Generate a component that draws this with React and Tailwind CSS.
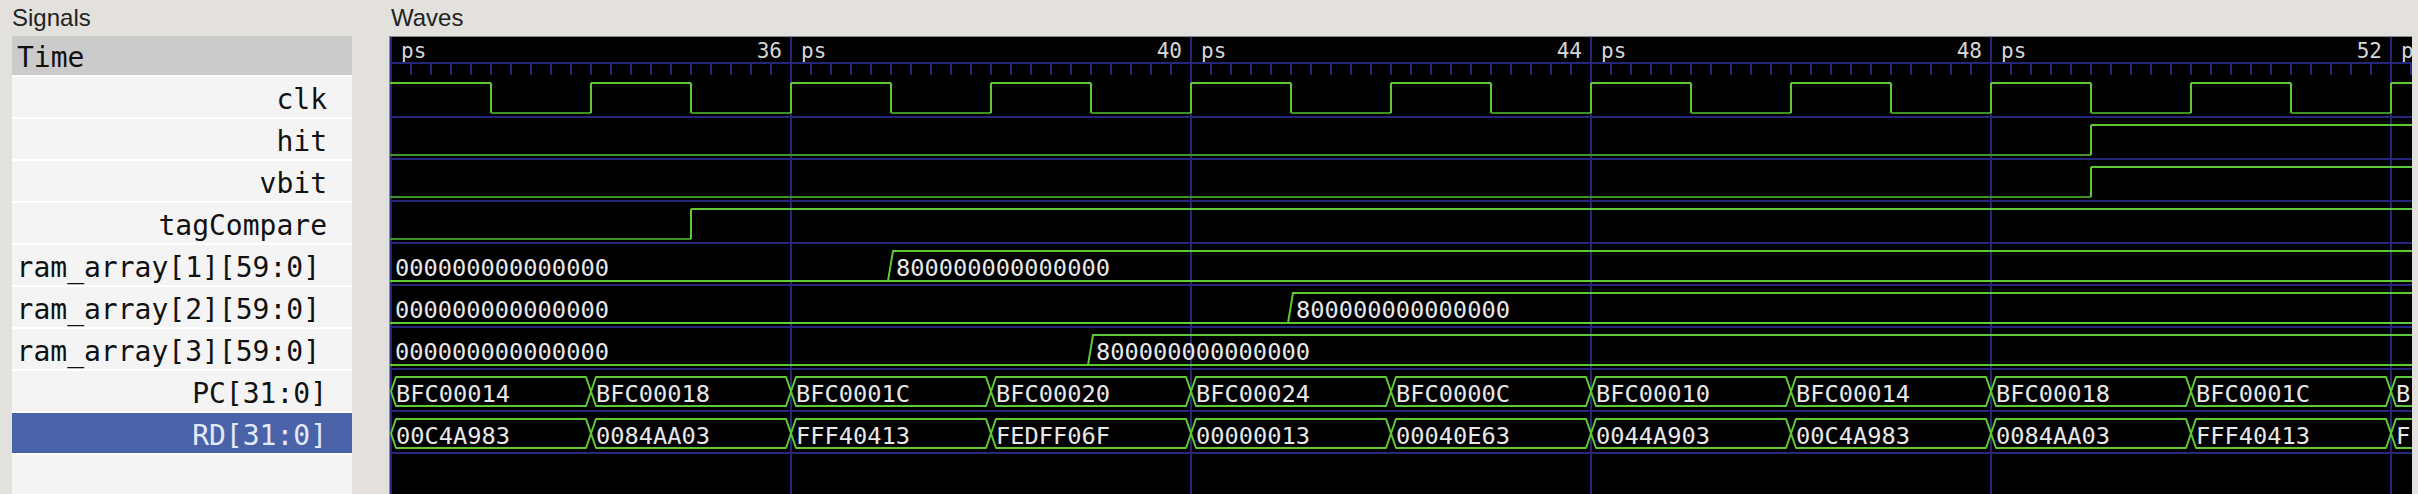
import React from "react";

const W = 2022;
const H = 457;
const GRID = "#26267c";
const HI = "#5cc935";
const LO = "#3f922a";
const BUS = "#5cc935";
const MONO = "DejaVu Sans Mono, Liberation Mono, monospace";

const names = [
  "clk",
  "hit",
  "vbit",
  "tagCompare",
  "ram_array[1][59:0]",
  "ram_array[2][59:0]",
  "ram_array[3][59:0]",
  "PC[31:0]",
  "RD[31:0]",
];

const PC = ["BFC00014", "BFC00018", "BFC0001C", "BFC00020", "BFC00024", "BFC0000C", "BFC00010", "BFC00014", "BFC00018", "BFC0001C", "BFC00020"];
const RD = ["00C4A983", "0084AA03", "FFF40413", "FEDFF06F", "00000013", "00040E63", "0044A903", "00C4A983", "0084AA03", "FFF40413", "FEDFF06F"];

const rowTop = (k) => 38 + 42 * k;

function BitTrace({ k, initial, edges }) {
  const top = rowTop(k);
  const hi = top + 8;
  const lo = top + 38;
  const els = [];
  let level = initial;
  let x = 0;
  const pts = [...edges, W];
  pts.forEach((e, i) => {
    const y = level ? hi : lo;
    els.push(<line key={"h" + i} x1={x} y1={y} x2={e} y2={y} stroke={level ? HI : LO} strokeWidth="2" />);
    if (e < W) {
      els.push(<line key={"v" + i} x1={e} y1={hi} x2={e} y2={lo} stroke={HI} strokeWidth="2" />);
      level = !level;
    }
    x = e;
  });
  return <g>{els}</g>;
}

function RamTrace({ k, t }) {
  const top = rowTop(k);
  const a = top + 8;
  const b = top + 38;
  return (
    <g>
      <path d={`M0 ${b} L${t - 3} ${b} L${t + 2} ${a} L${W} ${a}`} fill="none" stroke={BUS} strokeWidth="2" />
      <line x1={t - 3} y1={b} x2={W} y2={b} stroke={BUS} strokeWidth="2" />
      <text x={5} y={top + 33} fill="#e8e8e8" fontSize="23.7" fontFamily={MONO}>000000000000000</text>
      <text x={t + 5} y={top + 33} fill="#e8e8e8" fontSize="23.7" fontFamily={MONO}>800000000000000</text>
    </g>
  );
}

function BusTrace({ k, values }) {
  const top = rowTop(k);
  const a = top + 8;
  const b = top + 37;
  const m = (a + b) / 2;
  return (
    <g>
      {values.map((v, j) => {
        const x0 = 1 + 200 * j;
        const x1 = x0 + 200;
        return (
          <g key={j}>
            <polygon
              points={`${x0},${m} ${x0 + 5},${a} ${x1 - 5},${a} ${x1},${m} ${x1 - 5},${b} ${x0 + 5},${b}`}
              fill="none"
              stroke={BUS}
              strokeWidth="2"
              strokeLinejoin="round"
            />
            <text x={x0 + 5} y={top + 33} fill="#e8e8e8" fontSize="23.7" fontFamily={MONO}>{v}</text>
          </g>
        );
      })}
    </g>
  );
}

function Waves() {
  const ticks = [];
  for (let t = 0; t <= 101; t++) {
    const x = 1 + 20 * t;
    ticks.push(<line key={t} x1={x} y1={26} x2={x} y2={38} stroke={GRID} strokeWidth="2" />);
  }
  const labels = ["36", "40", "44", "48", "52"];
  const clkEdges = [];
  for (let j = 1; j * 100 + 1 < W; j++) clkEdges.push(1 + 100 * j);
  return (
    <svg width={W} height={H} className="block">
      <rect x="0" y="0" width={W} height={H} fill="#000" />
      {[0, 1, 2, 3, 4, 5].map((m) => (
        <line key={m} x1={1 + 400 * m} y1={0} x2={1 + 400 * m} y2={H} stroke={GRID} strokeWidth="2" />
      ))}
      <line x1={0} y1={26} x2={W} y2={26} stroke={GRID} strokeWidth="2" />
      {ticks}
      {names.map((_, k) => (
        <line key={k} x1={0} y1={80 + 42 * k} x2={W} y2={80 + 42 * k} stroke={GRID} strokeWidth="2" />
      ))}
      {[0, 1, 2, 3, 4, 5].map((m) => (
        <text key={"p" + m} x={11 + 400 * m} y={21} fill="#d6d6d6" fontSize="21" fontFamily={MONO}>ps</text>
      ))}
      {labels.map((l, m) => (
        <text key={"l" + m} x={392 + 400 * m} y={21} fill="#d6d6d6" fontSize="21" fontFamily={MONO} textAnchor="end">{l}</text>
      ))}
      <BitTrace k={0} initial={true} edges={clkEdges} />
      <BitTrace k={1} initial={false} edges={[1701]} />
      <BitTrace k={2} initial={false} edges={[1701]} />
      <BitTrace k={3} initial={false} edges={[301]} />
      <RamTrace k={4} t={501} />
      <RamTrace k={5} t={901} />
      <RamTrace k={6} t={701} />
      <BusTrace k={7} values={PC} />
      <BusTrace k={8} values={RD} />
    </svg>
  );
}

export default function App() {
  return (
    <div className="w-[2418px] h-[494px] bg-[#e2e1dd] flex overflow-hidden">
      <div className="ml-[12px] w-[340px] flex flex-col">
        <div className="h-[36px] pt-[6px] text-[24px] leading-none text-[#222] font-['Liberation_Sans',sans-serif]">Signals</div>
        <div className="flex-1 bg-[#f4f4f4] flex flex-col font-['DejaVu_Sans_Mono',monospace] text-[28px] text-[#111]">
          <div className="h-[39px] bg-[#cbcbcb] pl-[5px] pt-[5px] leading-[34px]">Time</div>
          {names.map((n, i) => {
            const sel = i === names.length - 1;
            const ram = n.startsWith("ram_array");
            return (
              <div
                key={n}
                className={
                  sel
                    ? "h-[42px] border-t-2 border-white bg-[#4a63a8] text-[#e3e9f8] pt-[6px] leading-[34px] text-right pr-[25px] whitespace-nowrap"
                    : ram
                    ? "h-[42px] border-t-2 border-white pt-[6px] leading-[34px] text-right pr-[32px] whitespace-nowrap"
                    : "h-[42px] border-t-2 border-white pt-[6px] leading-[34px] text-right pr-[25px] whitespace-nowrap"
                }
              >
                {n}
              </div>
            );
          })}
          <div className="h-[2px] bg-white" />
        </div>
      </div>
      <div className="ml-[37px] flex flex-col">
        <div className="h-[36px] pl-[2px] pt-[6px] text-[24px] leading-none text-[#222] font-['Liberation_Sans',sans-serif]">Waves</div>
        <div className="w-[2023px] flex-1 border-l border-t border-[#8a8a8a] bg-black overflow-hidden">
          <Waves />
        </div>
      </div>
    </div>
  );
}
